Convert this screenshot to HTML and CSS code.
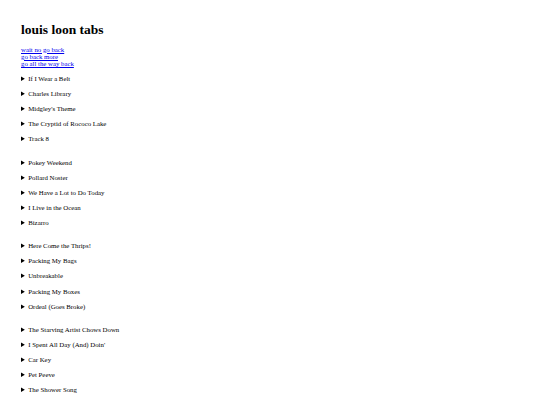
FILE: index.html
```html
<!DOCTYPE html>
<html>
<head>
<meta charset="utf-8">
<link rel="stylesheet" href="styles.css">
</head>
<body>
<div class="page">
  <h1 class="title">louis loon tabs</h1>
  <nav class="links">
    <a href="#">wait no go back</a>
    <a href="#">go back more</a>
    <a href="#">go all the way back</a>
  </nav>
  <div class="groups">
    <div class="group">
      <details><summary>If I Wear a Belt</summary></details>
      <details><summary>Charles Library</summary></details>
      <details><summary>Midgley's Theme</summary></details>
      <details><summary>The Cryptid of Rococo Lake</summary></details>
      <details><summary>Track 8</summary></details>
    </div>
    <div class="group">
      <details><summary>Pokey Weekend</summary></details>
      <details><summary>Pollard Noster</summary></details>
      <details><summary>We Have a Lot to Do Today</summary></details>
      <details><summary>I Live in the Ocean</summary></details>
      <details><summary>Bizarro</summary></details>
    </div>
    <div class="group">
      <details><summary>Here Come the Thrips!</summary></details>
      <details><summary>Packing My Bags</summary></details>
      <details><summary>Unbreakable</summary></details>
      <details><summary>Packing My Boxes</summary></details>
      <details><summary>Ordeal (Goes Broke)</summary></details>
    </div>
    <div class="group">
      <details><summary>The Starving Artist Chows Down</summary></details>
      <details><summary>I Spent All Day (And) Doin'</summary></details>
      <details><summary>Car Key</summary></details>
      <details><summary>Pet Peeve</summary></details>
      <details><summary>The Shower Song</summary></details>
    </div>
  </div>
</div>
</body>
</html>
```
FILE: styles.css
```css
html, body {
  margin: 0;
  padding: 0;
  background: #ffffff;
}
.page {
  padding: 21.5px 0 0 21px;
  font-family: "Liberation Serif", "Times New Roman", serif;
  font-size: 6.8px;
  color: #000;
}
.title {
  margin: 0;
  font-size: 13.5px;
  line-height: 15px;
  font-weight: bold;
}
.links {
  display: flex;
  flex-direction: column;
  align-items: flex-start;
  margin-top: 9px;
  line-height: 7.35px;
}
.links a {
  color: #0000ee;
  text-decoration: underline;
}
.groups {
  display: flex;
  flex-direction: column;
  gap: 15.9px;
  margin-top: 7.4px;
}
.group {
  display: flex;
  flex-direction: column;
  gap: 7.7px;
}
.group details {
  line-height: 7.4px;
}
.group summary {
  cursor: pointer;
}
```
